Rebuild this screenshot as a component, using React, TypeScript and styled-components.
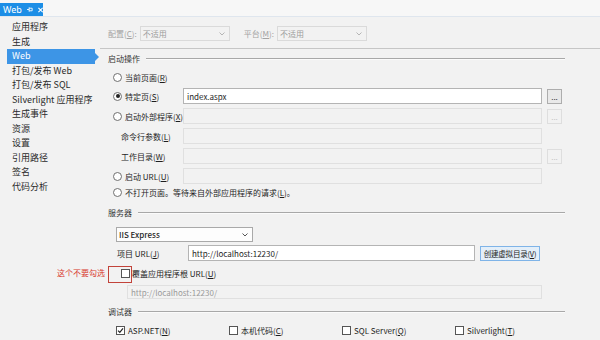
import styled, { createGlobalStyle } from "styled-components";

const GlobalStyle = createGlobalStyle`
    html, body {
        margin: 0;
        padding: 0;
        background: #f2f2f2;
    }
    body {
        font-family: "Noto Sans CJK SC", "Noto Sans", sans-serif;
        color: #1e1e1e;
    }
`

const Page = styled.div`
    width: 600px;
    height: 340px;
    display: flex;
    flex-direction: column;
    overflow: hidden;
    background: #f2f2f2;
`

const TabStrip = styled.div`
    height: 17px;
    display: flex;
    align-items: flex-end;
    background: #f7f7f7;
    border-bottom: 1px solid #dfe6ee;
    box-sizing: border-box;
`

const Tab = styled.div`
    width: 43px;
    height: 13px;
    background: #1c8ee6;
    color: #fff;
    display: flex;
    align-items: center;
    padding-left: 3px;
    box-sizing: border-box;
    font-size: 9px;
    font-family: "Noto Sans", sans-serif;
    gap: 5px;
`

const Body = styled.div`
    flex: 1;
    display: flex;
`

const Sidebar = styled.div`
    width: 100px;
    padding-top: 3px;
    display: flex;
    flex-direction: column;
`

const NavItem = styled.div<{ $active?: boolean }>`
    position: relative;
    height: 14.5px;
    line-height: 14.5px;
    margin-left: 7px;
    width: 88px;
    padding-left: 5px;
    box-sizing: border-box;
    font-size: 9px;
    white-space: nowrap;
    background: ${({ $active }) => $active ? '#3d95e6' : 'transparent'};
    color: ${({ $active }) => $active ? '#fff' : '#2a2a2a'};
    &::after {
        content: '';
        display: ${({ $active }) => $active ? 'block' : 'none'};
        position: absolute;
        right: -4px;
        top: 3.5px;
        border-left: 4px solid #3d95e6;
        border-top: 4px solid transparent;
        border-bottom: 4px solid transparent;
    }
`

const Content = styled.div`
    flex: 1;
    padding-left: 8px;
    display: flex;
    flex-direction: column;
    font-size: 8px;
`

const Key = styled.u`
    text-underline-offset: 1px;
`

const TopBar = styled.div`
    height: 32px;
    margin-left: -8px;
    padding: 2px 0 0 8px;
    box-sizing: border-box;
    border-bottom: 1px solid #c6c6c6;
    display: flex;
    align-items: center;
    color: #a3a3a3;
`

const TopLabel = styled.span<{ $ml?: number }>`
    margin-left: ${({ $ml }) => $ml ?? 0}px;
    margin-right: 3px;
`

const Select = styled.div<{ $w: number, $disabled?: boolean }>`
    width: ${({ $w }) => $w}px;
    height: 15px;
    box-sizing: border-box;
    border: 1px solid ${({ $disabled }) => $disabled ? '#dadada' : '#a9a9a9'};
    background: ${({ $disabled }) => $disabled ? '#f2f2f2' : '#fdfdfd'};
    color: ${({ $disabled }) => $disabled ? '#9c9c9c' : '#1e1e1e'};
    display: flex;
    align-items: center;
    justify-content: space-between;
    padding: 0 4px 0 2px;
    font-weight: ${({ $disabled }) => $disabled ? 400 : 500};
`

const SectionHeader = styled.div<{ $mt: number }>`
    width: 457px;
    height: 12px;
    margin-top: ${({ $mt }) => $mt}px;
    display: flex;
    align-items: center;
    gap: 6px;
    color: #333;
    &::after {
        content: '';
        flex: 1;
        height: 1px;
        background: #a8a8a8;
        box-shadow: 0 1px 0 #fbfbfb;
    }
`

const FormRow = styled.div<{ $h: number, $mt: number }>`
    height: ${({ $h }) => $h}px;
    margin-top: ${({ $mt }) => $mt}px;
    margin-left: 5px;
    display: grid;
    grid-template-columns: 65px 359px 15px;
    column-gap: 5px;
    align-items: center;
`

const Choice = styled.div<{ $indent?: number }>`
    display: flex;
    align-items: center;
    gap: 3px;
    white-space: nowrap;
    padding-left: ${({ $indent }) => $indent ?? 0}px;
`

const Radio = styled.span<{ $checked?: boolean }>`
    width: 9px;
    height: 9px;
    box-sizing: border-box;
    border-radius: 50%;
    border: 1px solid #707070;
    background: #fff;
    display: inline-flex;
    align-items: center;
    justify-content: center;
    flex-shrink: 0;
    &::after {
        content: '';
        width: 4px;
        height: 4px;
        border-radius: 50%;
        background: #222;
        display: ${({ $checked }) => $checked ? 'block' : 'none'};
    }
`

const Box = styled.span`
    width: 9px;
    height: 9px;
    box-sizing: border-box;
    border: 1px solid #555;
    background: #fff;
    display: inline-flex;
    align-items: center;
    justify-content: center;
    flex-shrink: 0;
`

const Input = styled.div<{ $w?: number, $h?: number, $disabled?: boolean }>`
    width: ${({ $w }) => $w ? `${$w}px` : 'auto'};
    height: ${({ $h }) => $h ?? 16}px;
    box-sizing: border-box;
    border: 1px solid ${({ $disabled }) => $disabled ? '#e0e0e0' : '#b4b4b4'};
    background: ${({ $disabled }) => $disabled ? '#f2f2f2' : '#fff'};
    color: ${({ $disabled }) => $disabled ? '#9a9a9a' : '#1e1e1e'};
    display: flex;
    align-items: center;
    padding-left: 3px;
    white-space: nowrap;
`

const DotsButton = styled.div<{ $disabled?: boolean }>`
    width: 15px;
    height: 15px;
    box-sizing: border-box;
    border: 1px solid ${({ $disabled }) => $disabled ? '#dedede' : '#adadad'};
    background: ${({ $disabled }) => $disabled ? '#f2f2f2' : '#e9e9e9'};
    color: ${({ $disabled }) => $disabled ? '#c4c4c4' : '#333'};
    display: flex;
    align-items: center;
    justify-content: center;
    font-size: 8px;
    line-height: 1;
    padding-top: 1px;
`

const ServerBlock = styled.div`
    padding-left: 8px;
    display: flex;
    flex-direction: column;
`

const SelectSlot = styled.div`
    margin-top: 9px;
`

const UrlRow = styled.div`
    height: 16px;
    margin-top: 3px;
    display: grid;
    grid-template-columns: 66px 287px 60px;
    column-gap: 5px;
    align-items: center;
    padding-left: 1px;
`

const VirtualDirButton = styled.div`
    height: 15px;
    box-sizing: border-box;
    border: 1px solid #7fb4e8;
    background: #e4eff9;
    display: flex;
    align-items: center;
    justify-content: center;
    white-space: nowrap;
    font-size: 7.5px;
    letter-spacing: -0.2px;
`

const OverrideRow = styled.div`
    position: relative;
    height: 14px;
    margin-top: 5px;
    margin-left: -8px;
    padding-left: 13px;
    display: flex;
    align-items: center;
    gap: 2px;
`

const RedBox = styled.div`
    position: absolute;
    left: 0;
    top: 0;
    width: 24px;
    height: 17px;
    border: 1px solid #c2433a;
    box-sizing: border-box;
`

const RedNote = styled.div`
    position: absolute;
    left: -51px;
    top: 0;
    height: 14px;
    line-height: 14px;
    color: #d8382c;
    white-space: nowrap;
`

const RootUrlSlot = styled.div`
    margin-top: 5px;
    margin-left: 11px;
`

const DebuggerRow = styled.div`
    height: 14px;
    margin-top: 6px;
    padding-left: 8px;
    display: grid;
    grid-template-columns: repeat(4, 113px);
    align-items: center;
`

function Chevron({ color }: { color: string }) {
    return (
        <svg width="6" height="4" viewBox="0 0 6 4">
            <path d="M0.5 0.5 L3 3 L5.5 0.5" fill="none" stroke={color} strokeWidth="1" />
        </svg>
    );
}

function Check() {
    return (
        <svg width="7" height="7" viewBox="0 0 7 7">
            <path d="M1 3.6 L2.8 5.4 L6 1.4" fill="none" stroke="#222" strokeWidth="1.2" />
        </svg>
    );
}

function Pin() {
    return (
        <svg width="7" height="7" viewBox="0 0 7 7">
            <path d="M0 3.5 H2.5 M2.5 1 V6 M2.5 2 H6 V5 H2.5" fill="none" stroke="#fff" strokeWidth="1" />
        </svg>
    );
}

function Close() {
    return (
        <svg width="6" height="6" viewBox="0 0 6 6">
            <path d="M0.5 0.5 L5.5 5.5 M5.5 0.5 L0.5 5.5" fill="none" stroke="#fff" strokeWidth="1.3" />
        </svg>
    );
}

const navItems = ["应用程序", "生成", "Web", "打包/发布 Web", "打包/发布 SQL", "Silverlight 应用程序", "生成事件", "资源", "设置", "引用路径", "签名", "代码分析"];

const debuggers = [
    { label: "ASP.NET", key: "N", checked: true },
    { label: "本机代码", key: "C", checked: false },
    { label: "SQL Server", key: "Q", checked: false },
    { label: "Silverlight", key: "T", checked: false },
];

export default function App() {
    return (
        <>
            <GlobalStyle />
            <Page>
                <TabStrip>
                    <Tab>
                        <span>Web</span>
                        <Pin />
                        <Close />
                    </Tab>
                </TabStrip>
                <Body>
                    <Sidebar>
                        {navItems.map((item) =>
                            <NavItem key={item} $active={item === "Web"}>{item}</NavItem>
                        )}
                    </Sidebar>
                    <Content>
                        <TopBar>
                            <TopLabel>配置(<Key>C</Key>):</TopLabel>
                            <Select $w={90} $disabled><span>不适用</span><Chevron color="#b5b5b5" /></Select>
                            <TopLabel $ml={14}>平台(<Key>M</Key>):</TopLabel>
                            <Select $w={90} $disabled><span>不适用</span><Chevron color="#b5b5b5" /></Select>
                        </TopBar>

                        <SectionHeader $mt={3}>启动操作</SectionHeader>
                        <FormRow $h={15} $mt={6}>
                            <Choice><Radio /><span>当前页面(<Key>R</Key>)</span></Choice>
                        </FormRow>
                        <FormRow $h={16} $mt={3}>
                            <Choice><Radio $checked /><span>特定页(<Key>S</Key>)</span></Choice>
                            <Input>index.aspx</Input>
                            <DotsButton>...</DotsButton>
                        </FormRow>
                        <FormRow $h={16} $mt={4}>
                            <Choice><Radio /><span>启动外部程序(<Key>X</Key>)</span></Choice>
                            <Input $disabled />
                            <DotsButton $disabled>...</DotsButton>
                        </FormRow>
                        <FormRow $h={16} $mt={4}>
                            <Choice $indent={8}><span>命令行参数(<Key>L</Key>)</span></Choice>
                            <Input $disabled />
                        </FormRow>
                        <FormRow $h={16} $mt={4}>
                            <Choice $indent={8}><span>工作目录(<Key>W</Key>)</span></Choice>
                            <Input $disabled />
                            <DotsButton $disabled>...</DotsButton>
                        </FormRow>
                        <FormRow $h={16} $mt={4}>
                            <Choice><Radio /><span>启动 URL(<Key>U</Key>)</span></Choice>
                            <Input $disabled />
                        </FormRow>
                        <FormRow $h={12} $mt={2}>
                            <Choice><Radio /><span>不打开页面。等待来自外部应用程序的请求(<Key>L</Key>)。</span></Choice>
                        </FormRow>

                        <SectionHeader $mt={8}>服务器</SectionHeader>
                        <ServerBlock>
                            <SelectSlot>
                                <Select $w={137}><span>IIS Express</span><Chevron color="#555" /></Select>
                            </SelectSlot>
                            <UrlRow>
                                <span>项目 URL(<Key>J</Key>)</span>
                                <Input>http://localhost:12230/</Input>
                                <VirtualDirButton><span>创建虚拟目录(<Key>V</Key>)</span></VirtualDirButton>
                            </UrlRow>
                            <OverrideRow>
                                <RedNote>这个不要勾选</RedNote>
                                <Box />
                                <span>覆盖应用程序根 URL(<Key>U</Key>)</span>
                                <RedBox />
                            </OverrideRow>
                            <RootUrlSlot>
                                <Input $w={415} $h={14} $disabled>http://localhost:12230/</Input>
                            </RootUrlSlot>
                        </ServerBlock>

                        <SectionHeader $mt={6}>调试器</SectionHeader>
                        <DebuggerRow>
                            {debuggers.map((d) =>
                                <Choice key={d.label}>
                                    <Box>{d.checked && <Check />}</Box>
                                    <span>{d.label}(<Key>{d.key}</Key>)</span>
                                </Choice>
                            )}
                        </DebuggerRow>
                    </Content>
                </Body>
            </Page>
        </>
    );
}
